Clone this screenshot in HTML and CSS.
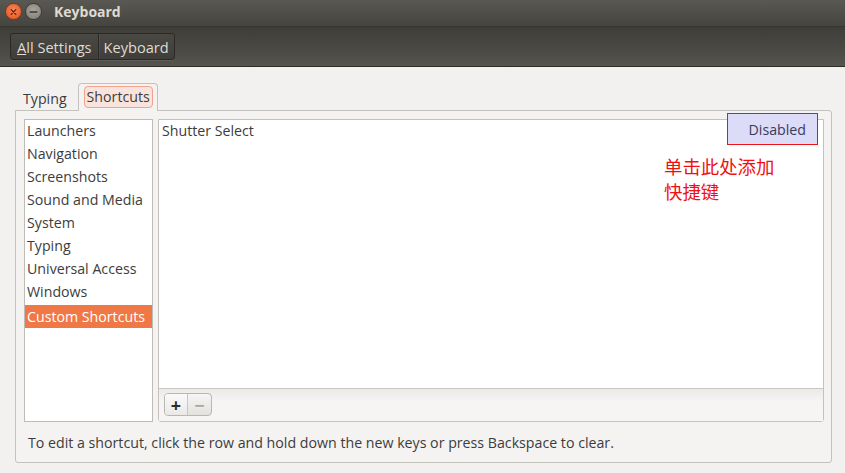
FILE: index.html
```html
<!DOCTYPE html>
<html>
<head>
<meta charset="utf-8">
<link rel="stylesheet" href="styles.css">
</head>
<body>
<div class="window">
  <div class="titlebar">
    <span class="wbtn close"><svg width="16" height="16" viewBox="0 0 16 16"><path d="M5.5 5.5l5 5M10.5 5.5l-5 5" stroke="#5a2310" stroke-width="1.4" stroke-linecap="round"/></svg></span>
    <span class="wbtn mini"><svg width="16" height="16" viewBox="0 0 16 16"><path d="M4.5 8h7" stroke="#3a3833" stroke-width="1.6" stroke-linecap="round"/></svg></span>
    <span class="title">Keyboard</span>
  </div>
  <div class="toolbar">
    <div class="linked">
      <span class="lbtn"><u>A</u>ll Settings</span>
      <span class="lbtn">Keyboard</span>
    </div>
  </div>
  <div class="content">
    <div class="tabs">
      <span class="tab">Typing</span>
      <span class="tab active"><span class="focus">Shortcuts</span></span>
    </div>
    <div class="notebook">
      <div class="panes">
        <ul class="cats">
          <li>Launchers</li>
          <li>Navigation</li>
          <li>Screenshots</li>
          <li>Sound and Media</li>
          <li>System</li>
          <li>Typing</li>
          <li>Universal Access</li>
          <li>Windows</li>
          <li class="sel">Custom Shortcuts</li>
        </ul>
        <div class="right">
          <div class="tree">
            <div class="row"><span class="name">Shutter Select</span><span class="accel">Disabled</span></div>
            <div class="note">单击此处添加<br>快捷键</div>
          </div>
          <div class="actions">
            <div class="pm"><span class="pbtn plus">+</span><span class="pbtn minus">−</span></div>
          </div>
        </div>
      </div>
      <div class="hint">To edit a shortcut, click the row and hold down the new keys or press Backspace to clear.</div>
    </div>
  </div>
</div>
</body>
</html>
```

FILE: styles.css
```css
* { box-sizing: border-box; }
html, body { margin: 0; padding: 0; }
body {
  width: 845px; height: 473px; overflow: hidden;
  font-family: "Open Sans", "DejaVu Sans", sans-serif;
  font-size: 14.2px;
  color: #3c3c3c;
  background: #f2f1f0;
}
.window { display: flex; flex-direction: column; height: 473px; }
.titlebar {
  height: 26px;
  background: linear-gradient(#5a5852, #45443f);
  display: flex; align-items: center;
  padding-left: 5px;
  padding-bottom: 3px;
}
.wbtn {
  width: 17px; height: 17px; border-radius: 50%;
  display: flex; align-items: center; justify-content: center;
  margin-right: 3px;
}
.close { background: radial-gradient(circle at 50% 40%, #f8875a, #e3501b); border: 1px solid #7a3a20; }
.mini { background: radial-gradient(circle at 50% 40%, #a7a49b, #7f7c74); border: 1px solid #3b3a36; }
.title {
  margin-left: 9px;
  color: #dfdbd2; font-weight: bold; font-size: 14px;
}
.toolbar {
  height: 41px;
  background: linear-gradient(#3e3d39, #4c4a45 60%, #56544e);
  border-top: 1px solid #35342f;
  border-bottom: 1px solid #2e2d2a;
  display: flex; align-items: center;
  padding-left: 10px;
}
.linked {
  display: flex;
  border: 1px solid #2a2926;
  border-radius: 3px;
  background: linear-gradient(#4a4843, #3f3e3a);
  box-shadow: 0 1px 0 rgba(255,255,255,0.08);
  height: 27px;
}
.lbtn {
  color: #dfdbd2;
  padding: 0 6px 0 6px;
  display: flex; align-items: center;
  font-size: 14.6px;
}
.lbtn + .lbtn { border-left: 1px solid #2a2926; box-shadow: inset 1px 0 0 rgba(255,255,255,0.06); padding: 0 5px 0 5px; }
.lbtn u { text-decoration: underline; }
.content { flex: 1; padding: 16px 13px 10px 15px; display: flex; flex-direction: column; }
.tabs { display: flex; align-items: flex-end; padding-left: 1px; height: 27px; }
.tab {
  padding: 0 4px 0 7px;
  height: 23px;
  display: flex; align-items: center;
  color: #3c3c3c;
}
.tab.active {
  height: 28px;
  margin-left: 7px;
  padding: 2px 4px 2px 5px;
  background: #f4f3f2;
  border: 1px solid #c4c2bd;
  border-bottom: none;
  border-radius: 4px 4px 0 0;
  margin-bottom: -1px;
  position: relative; z-index: 1;
  align-items: flex-start;
}
.focus {
  border: 1px solid #f0a38a;
  background: #f8e4dc;
  border-radius: 4px;
  padding: 0 2px 1px 2px;
  height: 22px;
  display: flex; align-items: center;
}
.notebook {
  flex: 1;
  background: #f4f3f2;
  border: 1px solid #c4c2bd;
  border-radius: 0 3px 3px 3px;
  padding: 8px 7px 0 8px;
  display: flex; flex-direction: column;
}
.panes { display: flex; gap: 5px; height: 303px; }
.cats {
  list-style: none; margin: 0; padding: 0;
  width: 129px;
  background: #fff;
  border: 1px solid #bebcb7;
}
.cats li {
  height: 23px; line-height: 21px; padding-left: 2px;
  white-space: nowrap;
}
.cats li.sel {
  background: #f07746; color: #fff;
  margin-top: 1px; height: 23px; line-height: 23px;
}
.right {
  flex: 1;
  border: 1px solid #c4c2bd;
  border-radius: 0 0 3px 3px;
  display: flex; flex-direction: column;
  background: #f4f3f2;
}
.tree {
  height: 269px;
  background: #fff;
  border-bottom: 1px solid #c8c6c1;
  position: relative;
}
.row { display: flex; justify-content: space-between; height: 20px; align-items: center; padding-left: 3px; }
.accel {
  margin-top: -2px;
  width: 91px; height: 32px;
  margin-right: 5px;
  background: #dcdcf8;
  border: 1px solid #e8141a;
  color: #3a3a5a;
  display: flex; align-items: center; justify-content: flex-end;
  padding-right: 11px;
  position: relative; z-index: 2;
}
.note {
  position: absolute; left: 505px; top: 34px;
  color: #f01010;
  font-family: "Noto Sans CJK SC", sans-serif;
  font-size: 18.4px; line-height: 25px;
}
.actions {
  flex: 1;
  background: linear-gradient(#eceae6, #f6f5f4 40%, #f6f5f4);
  padding: 4px 0 0 5px;
}
.pm {
  display: inline-flex;
  border: 1px solid #b9b7b2;
  border-radius: 4px;
  height: 23px;
  background: linear-gradient(#f6f5f4, #e4e2de);
}
.pbtn {
  width: 23px; display: flex; align-items: center; justify-content: center;
  font-size: 18px; font-weight: bold; line-height: 1;
}
.plus { color: #2d2d2d; border-right: 1px solid #c8c6c1; background: linear-gradient(#fafafa, #ebe9e6); border-radius: 3px 0 0 3px; }
.minus { color: #a9a7a2; }
.hint { padding: 11px 0 0 4px; color: #3c3c3c; }
```
